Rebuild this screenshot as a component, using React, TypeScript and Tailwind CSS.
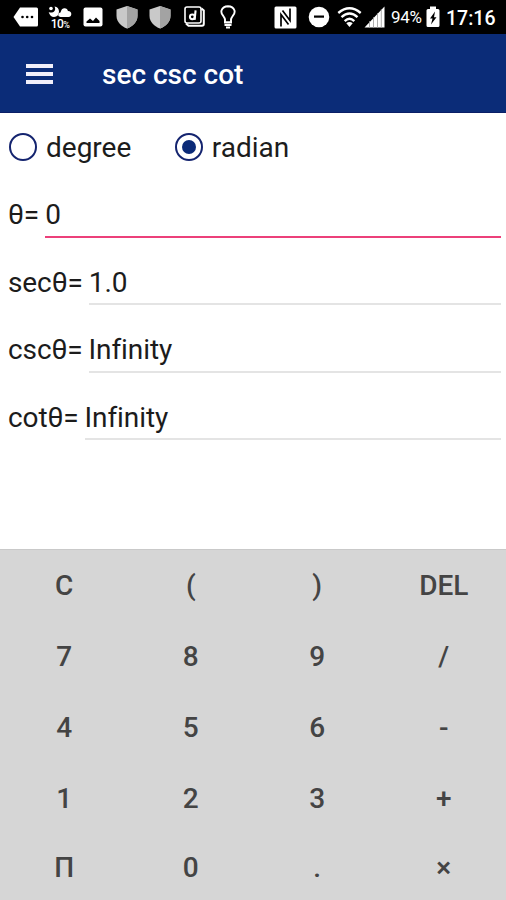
import { useState } from "react";

const KEYS = [
  "C", "(", ")", "DEL",
  "7", "8", "9", "/",
  "4", "5", "6", "-",
  "1", "2", "3", "+",
  "Π", "0", ".", "×",
];

function Shield() {
  return (
    <svg className="h-[24px] w-[24px] shrink-0" viewBox="0 0 24 24">
      <path d="M12 1 L22.5 4.5 V11 C22.5 17 17.5 21.5 12 23.5 C6.5 21.5 1.5 17 1.5 11 V4.5 Z" fill="#c9c9c9" />
      <path d="M12 1 L22.5 4.5 V11 C22.5 17 17.5 21.5 12 23.5 Z" fill="#a3a3a3" />
    </svg>
  );
}

function StatusBar() {
  return (
    <div className="flex h-[34px] items-center bg-black text-white">
      {/* more notifications */}
      <svg className="ml-[13px] h-[20px] w-[26px] shrink-0" viewBox="0 0 26 20">
        <path d="M7 0.5 H23.5 Q25 0.5 25 2 V18 Q25 19.5 23.5 19.5 H7 L0.5 10 Z" fill="#fff" />
        <circle cx="9.5" cy="10" r="1.3" fill="#000" />
        <circle cx="14.2" cy="10" r="1.3" fill="#000" />
        <circle cx="19" cy="10" r="1.3" fill="#000" />
      </svg>
      {/* weather with rain chance */}
      <div className="ml-[9px] flex w-[24px] shrink-0 flex-col items-center">
        <svg className="h-[12px] w-[24px]" viewBox="0 0 24 12">
          <path d="M6.5 0.5 C8 3 7 6 4 6.5 Q2 6.8 0.7 6 Q2 11 6 11 Q10.8 10.5 11 5.5 Q10.8 1.2 6.5 0.5 Z" fill="#fff" />
          <circle cx="3" cy="2.5" r="1.8" fill="#fff" />
          <path d="M12.5 11 Q9.5 10.5 10.5 7.8 Q11.5 6.5 12.5 6.5 Q13.5 1.8 17 2.2 Q19.5 2.5 20 5 Q23.5 5.3 23.3 8.3 Q23 11 20.5 11 Z" fill="#fff" />
        </svg>
        <span className="h-[11px] text-[12px] leading-[12px] font-medium tracking-[-0.6px]">
          10<span className="text-[9px]">%</span>
        </span>
      </div>
      <svg className="ml-[11px] h-[20px] w-[20px] shrink-0" viewBox="0 0 20 20">
        <rect x="0.5" y="0.5" width="19" height="19" rx="2" fill="#fff" />
        <path d="M3.5 16 V14.5 L7 11.5 L10 14 L13 10.5 L16.5 14 V16 Z" fill="#000" />
      </svg>
      <div className="ml-[12px] flex gap-[9px]">
        <Shield />
        <Shield />
      </div>
      {/* "d" app badge */}
      <svg className="ml-[12px] h-[22px] w-[22px] shrink-0" viewBox="0 0 22 22" fill="none" stroke="#fff">
        <rect x="1" y="1" width="16" height="16" rx="2" strokeWidth="1.6" />
        <path d="M2 17.5 L4.5 19.8 H18 Q19.8 19.8 19.8 18 V4.5 L17.5 2.5" strokeWidth="2" />
        <circle cx="8.3" cy="10.8" r="2.4" strokeWidth="2" />
        <path d="M11.6 4.3 L10.6 13.8" strokeWidth="2.1" />
      </svg>
      <svg className="ml-[14px] h-[24px] w-[16px] shrink-0" viewBox="0 0 16 24" fill="none" stroke="#fff" strokeWidth="1.9">
        <path d="M5 17 V14.5 Q4.8 13 3.3 11 Q0.8 8.5 1.5 5.5 Q3 1.3 8 1.2 Q13 1.3 14.5 5.5 Q15.2 8.5 12.7 11 Q11.2 13 11 14.5 V17" />
        <path d="M4 17.3 H12 M4.5 20 H11.5 M6 22.5 H10" strokeWidth="2.2" />
      </svg>
      {/* NFC */}
      <svg className="ml-[38px] h-[23px] w-[23px] shrink-0" viewBox="0 0 23 23">
        <rect x="0.5" y="0.5" width="22" height="22" rx="1.5" fill="#fff" />
        <path d="M7 20.5 V8.5 L14.5 18.5" fill="none" stroke="#000" strokeWidth="1.7" />
        <path d="M16 2.5 V14.5 L8.5 4.5" fill="none" stroke="#000" strokeWidth="1.7" />
      </svg>
      <svg className="ml-[11px] h-[22px] w-[22px] shrink-0" viewBox="0 0 22 22">
        <circle cx="11" cy="11" r="10.3" fill="#fff" />
        <rect x="6" y="9.5" width="10" height="2.2" fill="#000" />
      </svg>
      <svg className="ml-[7px] h-[22px] w-[25px] shrink-0" viewBox="0 0 25 22" fill="none" stroke="#fff" strokeWidth="2.4">
        <path d="M1.3 7 Q12.5 -2.5 23.7 7" />
        <path d="M4.5 11.2 Q12.5 4 20.5 11.2" />
        <path d="M7.7 15.2 Q12.5 10.5 17.3 15.2" />
        <path d="M9.3 17.3 Q12.5 14.6 15.7 17.3 L12.5 21 Z" fill="#fff" stroke="none" />
      </svg>
      <svg className="ml-[2px] h-[22px] w-[21px] shrink-0" viewBox="0 0 21 22">
        <path d="M0.5 21.5 L20.5 0.5 V21.5 Z" fill="#fff" />
        <path d="M5.5 15 V22 M9.5 11 V22 M13.5 7 V22 M17.3 3 V22" stroke="#999" strokeWidth="0.8" />
      </svg>
      <span className="ml-[6px] w-[32px] shrink-0 text-[17px] leading-[20px] tracking-[-0.3px]">94%</span>
      <svg className="ml-[3px] h-[22px] w-[14px] shrink-0" viewBox="0 0 14 22">
        <path d="M4 0.5 H10 V3 H12 Q13.5 3 13.5 4.5 V19.5 Q13.5 21 12 21 H2 Q0.5 21 0.5 19.5 V4.5 Q0.5 3 2 3 H4 Z" fill="#fff" />
        <path d="M9 5.5 L4 12.5 H6.5 L5 18.5 L10.5 11.3 H8 Z" fill="#000" />
      </svg>
      <span className="ml-[6px] shrink-0 pt-[3px] text-[19.5px] leading-[22px] font-medium">17:16</span>
    </div>
  );
}

function Radio({ label, checked, onSelect }: { label: string; checked: boolean; onSelect: () => void }) {
  return (
    <button role="radio" aria-checked={checked} onClick={onSelect} className="flex items-start gap-[9px]">
      <span className="mt-px flex h-7 w-7 items-center justify-center rounded-full border-2 border-[#14246f]">
        {checked && <span className="h-[14px] w-[14px] rounded-full bg-[#0b2a78]" />}
      </span>
      <span className="text-[28px] leading-[32px]">{label}</span>
    </button>
  );
}

function Field({ label, value, active = false }: { label: string; value: string; active?: boolean }) {
  return (
    <div className="flex h-[67.5px] items-end pr-[5px] pl-[8px]">
      <span className="pb-[6.5px] text-[28px] leading-[32px] tracking-[-0.1px]">{label}</span>
      <span
        className={`ml-[6px] flex-1 border-b-2 pb-[4.5px] text-[28px] leading-[32px] tracking-[-0.1px] ${
          active ? "border-[#ec407a]" : "border-[#e4e4e4]"
        }`}
      >
        {value}
      </span>
    </div>
  );
}

export default function App() {
  const [unit, setUnit] = useState("radian");

  return (
    <div className="flex h-[900px] w-[506px] flex-col overflow-hidden bg-white font-['Roboto',sans-serif] text-[#1c1c1c]">
      <StatusBar />
      <header className="flex h-[79px] items-center border-b border-[#0a1f66] bg-[#0b2c78] pl-[26px]">
        <button aria-label="menu" className="mt-px flex w-[27px] flex-col gap-[4px]">
          <span className="h-[4px] bg-[#f1effa]" />
          <span className="h-[4px] bg-[#f1effa]" />
          <span className="h-[4px] bg-[#f1effa]" />
        </button>
        <h1 className="ml-[49px] pt-[4px] text-[28px] leading-[32px] font-medium text-white">sec csc cot</h1>
      </header>

      <div className="flex h-[57px] items-start gap-[43.5px] pt-[19px] pl-[9px]" role="radiogroup">
        <Radio label="degree" checked={unit === "degree"} onSelect={() => setUnit("degree")} />
        <Radio label="radian" checked={unit === "radian"} onSelect={() => setUnit("radian")} />
      </div>

      <main className="flex-1">
        <Field label="θ=" value="0" active />
        <Field label="secθ=" value="1.0" />
        <Field label="cscθ=" value="Infinity" />
        <Field label="cotθ=" value="Infinity" />
      </main>

      <div className="-mr-px grid h-[351px] shrink-0 grid-cols-4 grid-rows-[71px_71px_71px_71px_68px] border-t border-[#c9c9c9] bg-[#d6d6d6] pl-px">
        {KEYS.map((key) => (
          <button key={key} className="text-[28px] leading-[32px] font-medium text-[#444444]">
            {key}
          </button>
        ))}
      </div>
    </div>
  );
}
